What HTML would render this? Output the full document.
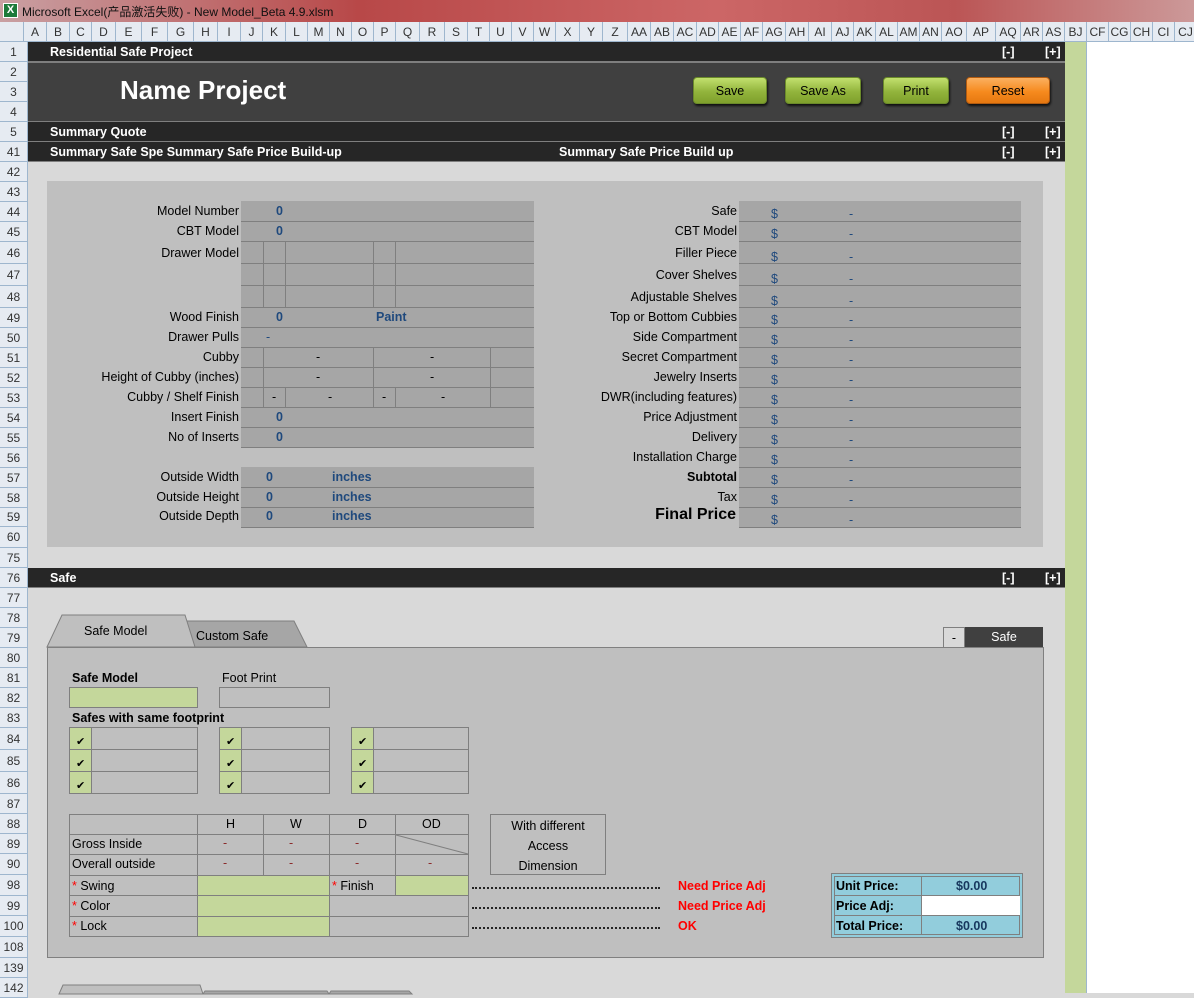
<!DOCTYPE html>
<html><head><meta charset="utf-8"><style>
*{margin:0;padding:0;box-sizing:border-box}
body{width:1194px;height:993px;overflow:hidden;position:relative;background:#d9d9d9;font-family:"Liberation Sans","Noto Sans CJK SC",sans-serif;font-size:12.5px;color:#000}
.a{position:absolute;white-space:nowrap}
.rh{position:absolute;left:0;width:28px;background:#e6ebf2;border-bottom:1px solid #9eb6ce;border-right:1px solid #9eb6ce;text-align:center;color:#333;font-size:12px}
.ch{position:absolute;top:22px;height:20px;background:#e6ebf2;border-right:1px solid #9eb6ce;border-bottom:1px solid #9eb6ce;text-align:center;line-height:20px;font-size:12px;color:#333}
.bar{position:absolute;left:28px;width:1037px;background:#262626;color:#fff;font-weight:bold;font-size:12.5px;border-bottom:1px solid #7f7f7f}
.lbl{position:absolute;text-align:right;white-space:nowrap;font-size:12.5px}
.cell{position:absolute;background:#a6a6a6;border-bottom:1px solid #7f7f7f}
.v{position:absolute;width:1px;background:#7f7f7f}
.b{color:#1f497d;font-weight:bold}
.btn{position:absolute;top:77px;height:27px;border-radius:4px;text-align:center;line-height:27px;font-size:12.5px;box-shadow:1px 2px 2px #111;border:1px solid #6b8a2a;background:linear-gradient(#c2e06e,#92b43c 55%,#7fa02c)}
.g{background:#c4d79b}
.bx{position:absolute;border:1px solid #7f7f7f}
</style></head><body>
<!-- title -->
<div class="a" style="left:0;top:0;width:1194px;height:22px;background:linear-gradient(90deg,#c9a0a3,#b84848 30%,#c66 60%,#b55 80%,#c99);"></div>
<div class="a" style="left:3px;top:3px;width:15px;height:15px;background:#1d7a3a;border:1px solid #fff;color:#fff;font-size:11px;font-weight:bold;text-align:center;line-height:13px">X</div>
<div class="a" style="left:22px;top:3px;font-size:12px;color:#111">Microsoft Excel(产品激活失败) - New Model_Beta 4.9.xlsm</div>
<!-- column headers -->
<div class="ch" style="left:0;width:24px"></div>
<div class="ch" style="left:24px;width:23px">A</div><div class="ch" style="left:47px;width:23px">B</div><div class="ch" style="left:70px;width:22px">C</div><div class="ch" style="left:92px;width:24px">D</div><div class="ch" style="left:116px;width:26px">E</div><div class="ch" style="left:142px;width:26px">F</div><div class="ch" style="left:168px;width:26px">G</div><div class="ch" style="left:194px;width:24px">H</div><div class="ch" style="left:218px;width:23px">I</div><div class="ch" style="left:241px;width:22px">J</div><div class="ch" style="left:263px;width:23px">K</div><div class="ch" style="left:286px;width:22px">L</div><div class="ch" style="left:308px;width:22px">M</div><div class="ch" style="left:330px;width:22px">N</div><div class="ch" style="left:352px;width:22px">O</div><div class="ch" style="left:374px;width:22px">P</div><div class="ch" style="left:396px;width:24px">Q</div><div class="ch" style="left:420px;width:25px">R</div><div class="ch" style="left:445px;width:23px">S</div><div class="ch" style="left:468px;width:22px">T</div><div class="ch" style="left:490px;width:22px">U</div><div class="ch" style="left:512px;width:22px">V</div><div class="ch" style="left:534px;width:22px">W</div><div class="ch" style="left:556px;width:24px">X</div><div class="ch" style="left:580px;width:23px">Y</div><div class="ch" style="left:603px;width:25px">Z</div><div class="ch" style="left:628px;width:23px">AA</div><div class="ch" style="left:651px;width:23px">AB</div><div class="ch" style="left:674px;width:23px">AC</div><div class="ch" style="left:697px;width:22px">AD</div><div class="ch" style="left:719px;width:22px">AE</div><div class="ch" style="left:741px;width:22px">AF</div><div class="ch" style="left:763px;width:23px">AG</div><div class="ch" style="left:786px;width:23px">AH</div><div class="ch" style="left:809px;width:23px">AI</div><div class="ch" style="left:832px;width:22px">AJ</div><div class="ch" style="left:854px;width:22px">AK</div><div class="ch" style="left:876px;width:22px">AL</div><div class="ch" style="left:898px;width:22px">AM</div><div class="ch" style="left:920px;width:22px">AN</div><div class="ch" style="left:942px;width:25px">AO</div><div class="ch" style="left:967px;width:29px">AP</div><div class="ch" style="left:996px;width:25px">AQ</div><div class="ch" style="left:1021px;width:22px">AR</div><div class="ch" style="left:1043px;width:22px">AS</div><div class="ch" style="left:1065px;width:22px">BJ</div><div class="ch" style="left:1087px;width:22px">CF</div><div class="ch" style="left:1109px;width:22px">CG</div><div class="ch" style="left:1131px;width:22px">CH</div><div class="ch" style="left:1153px;width:22px">CI</div><div class="ch" style="left:1175px;width:22px">CJ</div>
<!-- right columns -->
<div class="a g" style="left:1065px;top:42px;width:22px;height:951px;border-right:1px solid #9eb6ce"></div>
<div class="a" style="left:1087px;top:42px;width:107px;height:951px;background:#fff"></div>
<!-- row headers -->
<div class="rh" style="top:42px;height:20px;line-height:20px">1</div><div class="rh" style="top:62px;height:20px;line-height:20px">2</div><div class="rh" style="top:82px;height:20px;line-height:20px">3</div><div class="rh" style="top:102px;height:20px;line-height:20px">4</div><div class="rh" style="top:122px;height:20px;line-height:20px">5</div><div class="rh" style="top:142px;height:20px;line-height:20px">41</div><div class="rh" style="top:162px;height:20px;line-height:20px">42</div><div class="rh" style="top:182px;height:20px;line-height:20px">43</div><div class="rh" style="top:202px;height:20px;line-height:20px">44</div><div class="rh" style="top:222px;height:20px;line-height:20px">45</div><div class="rh" style="top:242px;height:22px;line-height:22px">46</div><div class="rh" style="top:264px;height:22px;line-height:22px">47</div><div class="rh" style="top:286px;height:22px;line-height:22px">48</div><div class="rh" style="top:308px;height:20px;line-height:20px">49</div><div class="rh" style="top:328px;height:20px;line-height:20px">50</div><div class="rh" style="top:348px;height:20px;line-height:20px">51</div><div class="rh" style="top:368px;height:20px;line-height:20px">52</div><div class="rh" style="top:388px;height:20px;line-height:20px">53</div><div class="rh" style="top:408px;height:20px;line-height:20px">54</div><div class="rh" style="top:428px;height:20px;line-height:20px">55</div><div class="rh" style="top:448px;height:20px;line-height:20px">56</div><div class="rh" style="top:468px;height:20px;line-height:20px">57</div><div class="rh" style="top:488px;height:20px;line-height:20px">58</div><div class="rh" style="top:508px;height:19px;line-height:19px">59</div><div class="rh" style="top:527px;height:21px;line-height:21px">60</div><div class="rh" style="top:548px;height:20px;line-height:20px">75</div><div class="rh" style="top:568px;height:20px;line-height:20px">76</div><div class="rh" style="top:588px;height:20px;line-height:20px">77</div><div class="rh" style="top:608px;height:20px;line-height:20px">78</div><div class="rh" style="top:628px;height:20px;line-height:20px">79</div><div class="rh" style="top:648px;height:20px;line-height:20px">80</div><div class="rh" style="top:668px;height:20px;line-height:20px">81</div><div class="rh" style="top:688px;height:20px;line-height:20px">82</div><div class="rh" style="top:708px;height:20px;line-height:20px">83</div><div class="rh" style="top:728px;height:22px;line-height:22px">84</div><div class="rh" style="top:750px;height:22px;line-height:22px">85</div><div class="rh" style="top:772px;height:22px;line-height:22px">86</div><div class="rh" style="top:794px;height:20px;line-height:20px">87</div><div class="rh" style="top:814px;height:20px;line-height:20px">88</div><div class="rh" style="top:834px;height:20px;line-height:20px">89</div><div class="rh" style="top:854px;height:21px;line-height:21px">90</div><div class="rh" style="top:875px;height:21px;line-height:21px">98</div><div class="rh" style="top:896px;height:20px;line-height:20px">99</div><div class="rh" style="top:916px;height:21px;line-height:21px">100</div><div class="rh" style="top:937px;height:21px;line-height:21px">108</div><div class="rh" style="top:958px;height:20px;line-height:20px">139</div><div class="rh" style="top:978px;height:20px;line-height:20px">142</div>
<!-- bars -->
<div class="bar" style="top:42px;height:20px;line-height:20px"><span class="a" style="left:22px">Residential Safe Project</span><span class="a" style="left:974px">[-]</span><span class="a" style="left:1017px">[+]</span></div>
<div class="a" style="left:28px;top:62px;width:1037px;height:60px;background:#404040;border-top:1px solid #7f7f7f;border-bottom:1px solid #7f7f7f"></div>
<div class="a" style="left:120px;top:75px;font-size:26px;font-weight:bold;color:#fff">Name Project</div>
<div class="btn" style="left:693px;width:74px">Save</div>
<div class="btn" style="left:785px;width:76px">Save As</div>
<div class="btn" style="left:883px;width:66px">Print</div>
<div class="btn" style="left:966px;width:84px;border-color:#b25b10;background:linear-gradient(#fbb060,#f68a1e 55%,#e67810)">Reset</div>
<div class="bar" style="top:122px;height:20px;line-height:20px"><span class="a" style="left:22px">Summary Quote</span><span class="a" style="left:974px">[-]</span><span class="a" style="left:1017px">[+]</span></div>
<div class="bar" style="top:142px;height:20px;line-height:20px"><span class="a" style="left:22px">Summary Safe Spe Summary Safe Price Build-up</span><span class="a" style="left:531px">Summary Safe Price Build up</span><span class="a" style="left:974px">[-]</span><span class="a" style="left:1017px">[+]</span></div>
<!-- summary panel -->
<div class="a" style="left:47px;top:181px;width:996px;height:366px;background:#bfbfbf"></div>
<!-- left table cells -->
<div class="cell" style="left:241px;top:201px;width:293px;height:21px"></div>
<div class="cell" style="left:241px;top:222px;width:293px;height:20px"></div>
<div class="cell" style="left:241px;top:242px;width:293px;height:22px"></div>
<div class="cell" style="left:241px;top:264px;width:293px;height:22px"></div>
<div class="cell" style="left:241px;top:286px;width:293px;height:22px"></div>
<div class="cell" style="left:241px;top:308px;width:293px;height:20px"></div>
<div class="cell" style="left:241px;top:328px;width:293px;height:20px"></div>
<div class="cell" style="left:241px;top:348px;width:293px;height:20px"></div>
<div class="cell" style="left:241px;top:368px;width:293px;height:20px"></div>
<div class="cell" style="left:241px;top:388px;width:293px;height:20px"></div>
<div class="cell" style="left:241px;top:408px;width:293px;height:20px"></div>
<div class="cell" style="left:241px;top:428px;width:293px;height:20px"></div>
<div class="cell" style="left:241px;top:467px;width:293px;height:21px"></div>
<div class="cell" style="left:241px;top:488px;width:293px;height:20px"></div>
<div class="cell" style="left:241px;top:508px;width:293px;height:20px"></div>
<div class="v" style="left:263px;top:242px;height:66px"></div><div class="v" style="left:285px;top:242px;height:66px"></div><div class="v" style="left:373px;top:242px;height:66px"></div><div class="v" style="left:395px;top:242px;height:66px"></div>
<div class="v" style="left:263px;top:348px;height:60px"></div><div class="v" style="left:373px;top:348px;height:60px"></div><div class="v" style="left:490px;top:348px;height:60px"></div>
<div class="v" style="left:285px;top:388px;height:20px"></div><div class="v" style="left:395px;top:388px;height:20px"></div>
<div class="lbl" style="right:955px;top:204px">Model Number</div>
<div class="lbl" style="right:955px;top:224px">CBT Model</div>
<div class="lbl" style="right:955px;top:246px">Drawer Model</div>
<div class="lbl" style="right:955px;top:310px">Wood Finish</div>
<div class="lbl" style="right:955px;top:330px">Drawer Pulls</div>
<div class="lbl" style="right:955px;top:350px">Cubby</div>
<div class="lbl" style="right:955px;top:370px">Height of Cubby (inches)</div>
<div class="lbl" style="right:955px;top:390px">Cubby / Shelf Finish</div>
<div class="lbl" style="right:955px;top:410px">Insert Finish</div>
<div class="lbl" style="right:955px;top:430px">No of Inserts</div>
<div class="lbl" style="right:955px;top:470px">Outside Width</div>
<div class="lbl" style="right:955px;top:490px">Outside Height</div>
<div class="lbl" style="right:955px;top:509px">Outside Depth</div>
<div class="a b" style="left:276px;top:204px">0</div>
<div class="a b" style="left:276px;top:224px">0</div>
<div class="a b" style="left:276px;top:310px">0</div>
<div class="a b" style="left:376px;top:310px">Paint</div>
<div class="a" style="left:266px;top:330px;color:#1f497d">-</div>
<div class="a" style="left:316px;top:350px">-</div><div class="a" style="left:430px;top:350px">-</div>
<div class="a" style="left:316px;top:370px">-</div><div class="a" style="left:430px;top:370px">-</div>
<div class="a" style="left:272px;top:390px">-</div><div class="a" style="left:328px;top:390px">-</div><div class="a" style="left:382px;top:390px">-</div><div class="a" style="left:441px;top:390px">-</div>
<div class="a b" style="left:276px;top:410px">0</div>
<div class="a b" style="left:276px;top:430px">0</div>
<div class="a b" style="left:266px;top:470px">0</div><div class="a b" style="left:332px;top:470px">inches</div>
<div class="a b" style="left:266px;top:490px">0</div><div class="a b" style="left:332px;top:490px">inches</div>
<div class="a b" style="left:266px;top:509px">0</div><div class="a b" style="left:332px;top:509px">inches</div>
<!-- right table -->
<div class="cell" style="left:739px;top:201px;width:282px;height:21px"></div>
<div class="cell" style="left:739px;top:222px;width:282px;height:20px"></div>
<div class="cell" style="left:739px;top:242px;width:282px;height:22px"></div>
<div class="cell" style="left:739px;top:264px;width:282px;height:22px"></div>
<div class="cell" style="left:739px;top:286px;width:282px;height:22px"></div>
<div class="cell" style="left:739px;top:308px;width:282px;height:20px"></div>
<div class="cell" style="left:739px;top:328px;width:282px;height:20px"></div>
<div class="cell" style="left:739px;top:348px;width:282px;height:20px"></div>
<div class="cell" style="left:739px;top:368px;width:282px;height:20px"></div>
<div class="cell" style="left:739px;top:388px;width:282px;height:20px"></div>
<div class="cell" style="left:739px;top:408px;width:282px;height:20px"></div>
<div class="cell" style="left:739px;top:428px;width:282px;height:20px"></div>
<div class="cell" style="left:739px;top:448px;width:282px;height:20px"></div>
<div class="cell" style="left:739px;top:468px;width:282px;height:20px"></div>
<div class="cell" style="left:739px;top:488px;width:282px;height:20px"></div>
<div class="cell" style="left:739px;top:508px;width:282px;height:20px"></div>
<div class="lbl" style="right:457px;top:204px">Safe</div>
<div class="lbl" style="right:457px;top:224px">CBT Model</div>
<div class="lbl" style="right:457px;top:246px">Filler Piece</div>
<div class="lbl" style="right:457px;top:268px">Cover Shelves</div>
<div class="lbl" style="right:457px;top:290px">Adjustable Shelves</div>
<div class="lbl" style="right:457px;top:310px">Top or Bottom Cubbies</div>
<div class="lbl" style="right:457px;top:330px">Side Compartment</div>
<div class="lbl" style="right:457px;top:350px">Secret Compartment</div>
<div class="lbl" style="right:457px;top:370px">Jewelry Inserts</div>
<div class="lbl" style="right:457px;top:390px">DWR(including features)</div>
<div class="lbl" style="right:457px;top:410px">Price Adjustment</div>
<div class="lbl" style="right:457px;top:430px">Delivery</div>
<div class="lbl" style="right:457px;top:450px">Installation Charge</div>
<div class="lbl" style="right:457px;top:470px;font-weight:bold">Subtotal</div>
<div class="lbl" style="right:457px;top:490px">Tax</div>
<div class="lbl" style="right:458px;top:506px;font-weight:bold;font-size:16px">Final Price</div>
<div class="a" style="left:771px;top:204px;color:#1f497d;line-height:20px">$<br>$</div>
<div class="a" style="left:771px;top:246px;color:#1f497d;line-height:22px">$<br>$<br>$</div>
<div class="a" style="left:771px;top:310px;color:#1f497d;line-height:20px">$<br>$<br>$<br>$<br>$<br>$<br>$<br>$<br>$<br>$<br>$</div>
<div class="a" style="left:849px;top:204px;color:#1f497d;line-height:20px">-<br>-</div>
<div class="a" style="left:849px;top:246px;color:#1f497d;line-height:22px">-<br>-<br>-</div>
<div class="a" style="left:849px;top:310px;color:#1f497d;line-height:20px">-<br>-<br>-<br>-<br>-<br>-<br>-<br>-<br>-<br>-<br>-</div>
<!-- Safe bar -->
<div class="bar" style="top:568px;height:20px;line-height:20px"><span class="a" style="left:22px">Safe</span><span class="a" style="left:974px">[-]</span><span class="a" style="left:1017px">[+]</span></div>
<!-- tabs -->
<svg class="a" style="left:40px;top:610px" width="280" height="40"><polygon points="125,38 147,38 147,11 254,11 267,37 125,37" fill="#a6a6a6" stroke="#7f7f7f"/><polygon points="7,37 22,5 145,5 155,37" fill="#bfbfbf" stroke="#7f7f7f"/></svg>
<div class="a" style="left:84px;top:624px">Safe Model</div>
<div class="a" style="left:196px;top:629px">Custom Safe</div>
<div class="a" style="left:943px;top:627px;width:22px;height:21px;background:#d9d9d9;border:1px solid #7f7f7f;text-align:center;line-height:20px">-</div>
<div class="a" style="left:965px;top:627px;width:78px;height:21px;background:#404040;color:#fff;text-align:center;line-height:21px">Safe</div>
<div class="a" style="left:47px;top:647px;width:997px;height:311px;background:#bfbfbf;border:1px solid #808080"></div>
<div class="a" style="left:72px;top:671px;font-weight:bold">Safe Model</div>
<div class="a" style="left:222px;top:671px">Foot Print</div>
<div class="bx g" style="left:69px;top:687px;width:129px;height:21px"></div>
<div class="bx" style="left:219px;top:687px;width:111px;height:21px"></div>
<div class="a" style="left:72px;top:711px;font-weight:bold">Safes with same footprint</div>
<!-- checkbox groups -->
<div class="bx" style="left:69px;top:727px;width:129px;height:67px"></div><div class="a g" style="left:70px;top:728px;width:21px;height:65px"></div><div class="v" style="left:91px;top:728px;height:65px"></div>
<div class="bx" style="left:219px;top:727px;width:111px;height:67px"></div><div class="a g" style="left:220px;top:728px;width:21px;height:65px"></div><div class="v" style="left:241px;top:728px;height:65px"></div>
<div class="bx" style="left:351px;top:727px;width:118px;height:67px"></div><div class="a g" style="left:352px;top:728px;width:21px;height:65px"></div><div class="v" style="left:373px;top:728px;height:65px"></div>
<div class="a" style="left:70px;top:749px;width:128px;height:1px;background:#7f7f7f"></div><div class="a" style="left:70px;top:771px;width:128px;height:1px;background:#7f7f7f"></div>
<div class="a" style="left:220px;top:749px;width:110px;height:1px;background:#7f7f7f"></div><div class="a" style="left:220px;top:771px;width:110px;height:1px;background:#7f7f7f"></div>
<div class="a" style="left:352px;top:749px;width:117px;height:1px;background:#7f7f7f"></div><div class="a" style="left:352px;top:771px;width:117px;height:1px;background:#7f7f7f"></div>
<div class="a" style="left:76px;top:731px;font-size:11px;line-height:22px">✔<br>✔<br>✔</div>
<div class="a" style="left:226px;top:731px;font-size:11px;line-height:22px">✔<br>✔<br>✔</div>
<div class="a" style="left:358px;top:731px;font-size:11px;line-height:22px">✔<br>✔<br>✔</div>
<!-- dims table -->
<div class="a g" style="left:197px;top:875px;width:132px;height:61px"></div>
<div class="a g" style="left:395px;top:875px;width:73px;height:20px"></div>
<div class="bx" style="left:69px;top:814px;width:400px;height:123px"></div>
<div class="a" style="left:70px;top:834px;width:398px;height:1px;background:#7f7f7f"></div>
<div class="a" style="left:70px;top:854px;width:398px;height:1px;background:#7f7f7f"></div>
<div class="a" style="left:70px;top:875px;width:398px;height:1px;background:#7f7f7f"></div>
<div class="a" style="left:70px;top:895px;width:398px;height:1px;background:#7f7f7f"></div>
<div class="a" style="left:70px;top:916px;width:398px;height:1px;background:#7f7f7f"></div>
<div class="v" style="left:197px;top:814px;height:122px"></div>
<div class="v" style="left:263px;top:814px;height:61px"></div>
<div class="v" style="left:329px;top:814px;height:122px"></div>
<div class="v" style="left:395px;top:814px;height:81px"></div>
<svg class="a" style="left:395px;top:834px" width="74" height="21"><line x1="1" y1="1" x2="73" y2="20" stroke="#7f7f7f"/></svg>
<div class="a" style="left:226px;top:817px">H</div><div class="a" style="left:290px;top:817px">W</div><div class="a" style="left:358px;top:817px">D</div><div class="a" style="left:422px;top:817px">OD</div>
<div class="a" style="left:72px;top:837px">Gross Inside</div>
<div class="a" style="left:72px;top:857px">Overall outside</div>
<div class="a" style="left:223px;top:836px;color:#8b2b2b">-</div><div class="a" style="left:289px;top:836px;color:#8b2b2b">-</div><div class="a" style="left:355px;top:836px;color:#8b2b2b">-</div>
<div class="a" style="left:223px;top:856px;color:#8b2b2b">-</div><div class="a" style="left:289px;top:856px;color:#8b2b2b">-</div><div class="a" style="left:355px;top:856px;color:#8b2b2b">-</div><div class="a" style="left:428px;top:856px;color:#8b2b2b">-</div>
<div class="a" style="left:72px;top:879px"><span style="color:red">*</span> Swing</div>
<div class="a" style="left:332px;top:879px"><span style="color:red">*</span> Finish</div>
<div class="a" style="left:72px;top:899px"><span style="color:red">*</span> Color</div>
<div class="a" style="left:72px;top:919px"><span style="color:red">*</span> Lock</div>
<div class="bx" style="left:490px;top:814px;width:116px;height:61px;text-align:center;line-height:20px;padding-top:1px">With different<br>Access<br>Dimension</div>
<div class="a" style="left:472px;top:887px;width:188px;border-top:2px dotted #222"></div>
<div class="a" style="left:472px;top:907px;width:188px;border-top:2px dotted #222"></div>
<div class="a" style="left:472px;top:927px;width:188px;border-top:2px dotted #222"></div>
<div class="a" style="left:678px;top:879px;color:red;font-weight:bold">Need Price Adj</div>
<div class="a" style="left:678px;top:899px;color:red;font-weight:bold">Need Price Adj</div>
<div class="a" style="left:678px;top:919px;color:red;font-weight:bold">OK</div>
<!-- price box -->
<div class="a" style="left:831px;top:873px;width:192px;height:65px;background:#92cddc;border:1px solid #7f7f7f;outline:1px solid #92cddc;outline-offset:-3px"></div>
<div class="a" style="left:834px;top:876px;width:186px;height:59px;border:1px solid #7f7f7f"></div>
<div class="a" style="left:921px;top:876px;width:1px;height:59px;background:#7f7f7f"></div>
<div class="a" style="left:922px;top:895px;width:98px;height:20px;background:#fff"></div>
<div class="a" style="left:835px;top:895px;width:185px;height:1px;background:#7f7f7f"></div>
<div class="a" style="left:835px;top:915px;width:185px;height:1px;background:#7f7f7f"></div>
<div class="a" style="left:836px;top:879px;font-weight:bold">Unit Price:</div>
<div class="a" style="left:836px;top:899px;font-weight:bold">Price Adj:</div>
<div class="a" style="left:836px;top:919px;font-weight:bold">Total Price:</div>
<div class="a" style="left:956px;top:879px;font-weight:bold;color:#17375e">$0.00</div>
<div class="a" style="left:956px;top:919px;font-weight:bold;color:#17375e">$0.00</div>
<!-- bottom tabs -->
<svg class="a" style="left:55px;top:983px" width="360" height="12"><polygon points="4,11 8,2 145,2 148,11" fill="#bfbfbf" stroke="#7f7f7f"/><polygon points="148,11 150,8 272,8 274,11" fill="#a6a6a6" stroke="#7f7f7f"/><polygon points="274,11 276,8 354,8 357,11" fill="#a6a6a6" stroke="#7f7f7f"/></svg>
</body></html>
